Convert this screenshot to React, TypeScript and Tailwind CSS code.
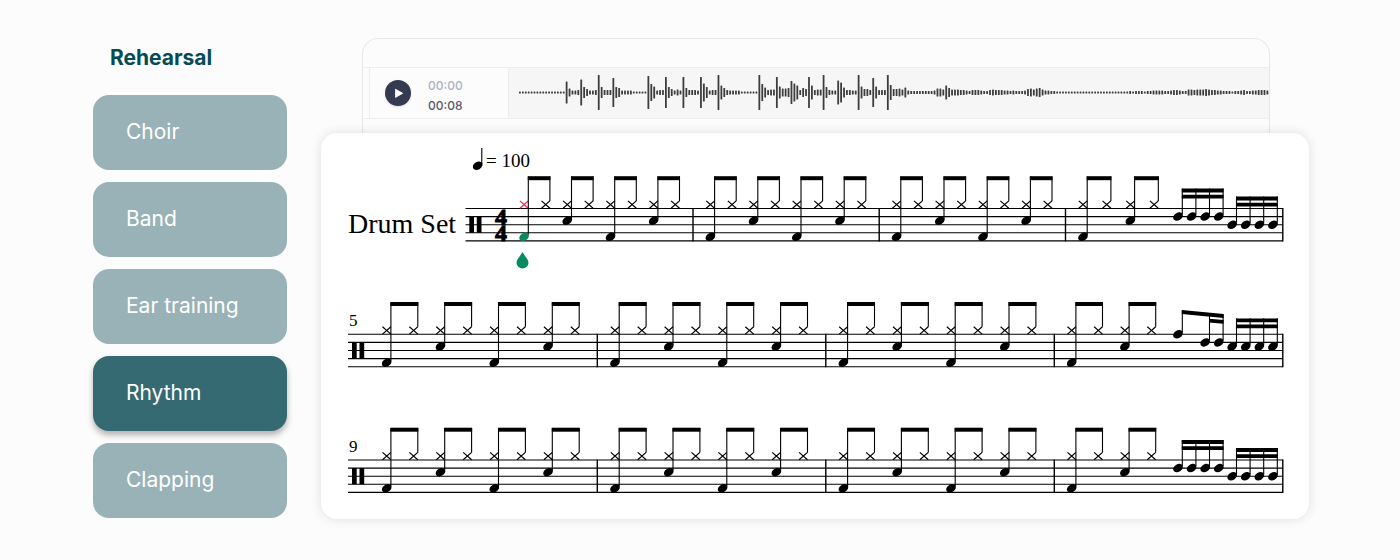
import { clsx } from "clsx";

const categories = ["Choir", "Band", "Ear training", "Rhythm", "Clapping"];

// bar heights of the recording, left to right
const wave = [
  2, 2, 2, 2, 2, 2, 2, 2, 2, 2, 2, 2, 2, 2, 2, 2,
  22, 8, 4, 4, 5, 26, 11, 7, 4, 4, 5, 35, 11, 5, 5, 5, 29, 11, 9, 4, 4, 4, 4, 2, 2, 2, 2, 2,
  33, 17, 12, 4, 5, 5, 31, 11, 7, 4, 6, 4, 31, 9, 5, 5, 5, 4, 31, 18, 11, 4, 5, 5,
  35, 14, 9, 5, 4, 4, 4, 4, 2, 2, 2, 2, 2, 2, 35, 17, 10, 5, 6, 6, 31, 12, 8, 8, 9,
  23, 18, 14, 5, 9, 7, 31, 14, 5, 6, 6, 35, 11, 5, 4, 4, 24, 20, 10, 5, 5, 4, 4,
  35, 12, 7, 7, 5, 29, 12, 5, 5, 5, 35, 15, 7, 7, 8, 6, 10, 4,
  3, 3, 3, 3, 3, 3, 3, 3, 4, 8, 8, 6, 14, 9, 6, 6, 6, 5, 5, 4, 3, 5, 5,
  5, 4, 3, 3, 5, 6, 5, 5, 5, 4, 4, 3, 4, 3, 3, 3, 4, 7, 8, 6, 8, 9, 6, 4, 4, 3, 3,
  2, 2, 2, 2, 2, 2, 2, 2, 2, 2, 2, 2, 2, 2, 2, 2, 2, 2, 2, 2, 2, 2, 2, 2, 2, 3, 2, 3, 3, 3, 2, 3, 3, 4, 4,
  4, 4, 3, 3, 4, 5, 5, 4, 3, 3, 6, 6, 5, 6, 6, 6, 7, 6, 5, 5, 4, 4, 3, 3, 3, 2, 3, 3, 4, 5, 3, 3, 4, 4, 5, 5, 5, 4,
];

const SPACE = 8.1;

function Head({ x, y, color = "black" }: { x: number; y: number; color?: string }) {
  return <ellipse cx={x} cy={y} rx="5.2" ry="3.8" transform={`rotate(-32 ${x} ${y})`} fill={color} />;
}

function Cross({ x, color = "black" }: { x: number; color?: string }) {
  return <path d={`M${x - 4.2} -7.6l8.4 7.4m0 -7.4l-8.4 7.4`} stroke={color} strokeWidth="1.2" fill="none" />;
}

// hi-hat pair with a kick (low) or snare under its first note
function Pair({ x, gap, low, active }: { x: number; gap: number; low: boolean; active?: boolean }) {
  const y = SPACE * (low ? 3.5 : 1.5);
  return (
    <g>
      <Cross x={x} color={active ? "#f0204c" : "black"} />
      <Cross x={x + gap} />
      <path d={`M${x + 4.2} -32V${y - 2}M${x + gap + 4.2} -32V-7.5`} stroke="black" strokeWidth="1.1" />
      <path d={`M${x + 3.7} -30.3h${gap + 1}`} stroke="black" strokeWidth="4" />
      <Head x={x} y={y} color={active ? "#078a60" : "black"} />
    </g>
  );
}

function Measure({ x, gap, pairs = 4, active }: { x: number; gap: number; pairs?: number; active?: boolean }) {
  return (
    <>
      {Array.from({ length: pairs }, (_, i) => (
        <Pair key={i} x={x + i * 2 * gap} gap={gap} low={i % 2 === 0} active={active && i === 0} />
      ))}
    </>
  );
}

function Sixteenths({ x, y, top }: { x: number; y: number; top: number }) {
  const xs = [0, 1, 2, 3].map((i) => x + i * 13.6);
  return (
    <g>
      {xs.map((nx) => (
        <g key={nx}>
          <Head x={nx} y={y} />
          <path d={`M${nx + 4.3} ${top}V${y - 2}`} stroke="black" strokeWidth="1.1" />
        </g>
      ))}
      <path d={`M${x + 3.8} ${top + 2}h41.8m-41.8 6.1h41.8`} stroke="black" strokeWidth="3.8" />
    </g>
  );
}

// eighth note followed by two sixteenths under a falling beam
function Falling({ x }: { x: number }) {
  return (
    <g>
      <Head x={x} y={0} />
      <Head x={x + 27.2} y={SPACE} />
      <Head x={x + 40.8} y={SPACE} />
      <path d={`M${x + 4.3} -24V-2M${x + 31.5} -21V6M${x + 45.1} -20V6`} stroke="black" strokeWidth="1.1" />
      <path d={`M${x + 3.8} -24.3l41.8 4v3.9l-41.8 -4zM${x + 31} -15.6l14.6 1.4v3.7l-14.6 -1.4z`} />
    </g>
  );
}

function Staff({ start, bars, clef }: { start: number; bars: number[]; clef: number }) {
  return (
    <g>
      {[0, 1, 2, 3, 4].map((n) => (
        <path key={n} d={`M${start} ${n * SPACE}H962`} stroke="black" strokeWidth="1.1" />
      ))}
      {bars.map((x) => (
        <path key={x} d={`M${x} -0.5V${SPACE * 4 + 0.5}`} stroke="black" strokeWidth="1.4" />
      ))}
      <path d={`M${clef} ${SPACE}h4.7v16.2h-4.7zm7.5 0h4.7v16.2h-4.7z`} />
    </g>
  );
}

function Score() {
  const rows = [
    { label: "5", y: 201.3 },
    { label: "9", y: 327 },
  ];
  return (
    <svg viewBox="0 0 988 386" className="block w-full font-['Liberation_Serif',serif]" role="img" aria-label="Drum Set score">
      <Head x={156.7} y={32.7} />
      <path d="M160.8 15V31" stroke="black" strokeWidth="1.1" />
      <text x="165" y="34" fontSize="19">= 100</text>
      <text x="27" y="100" fontSize="28">Drum Set</text>

      <g transform="translate(0 75.5)">
        <Staff start={144.5} bars={[372, 558.2, 744.5, 961.8]} clef={148.3} />
        <text fontSize="24" fontWeight="700" stroke="black" strokeWidth="0.9">
          <tspan x="174" y="16.2">4</tspan>
          <tspan x="174" y="32.4">4</tspan>
        </text>
        <Measure x={203.1} gap={21.6} active />
        <Measure x={389.4} gap={21.6} />
        <Measure x={575.6} gap={21.6} />
        <Measure x={762} gap={23.7} pairs={2} />
        <Sixteenths x={857} y={SPACE} top={-20} />
        <Sixteenths x={911.2} y={SPACE * 2} top={-12} />
        <path d="M201.5 43.5c-2 4-6 7.2-6 10.8a6 5.6 0 0 0 12 0c0-3.6-4-6.8-6-10.8z" fill="#078a60" />
      </g>

      {rows.map((row, i) => (
        <g key={row.label} transform={`translate(0 ${row.y})`}>
          <text x="28" y="-8" fontSize="17">{row.label}</text>
          <Staff start={27} bars={[276.3, 504.8, 733.3, 961.8]} clef={31} />
          <Measure x={65.7} gap={26.9} />
          <Measure x={294} gap={26.9} />
          <Measure x={522.4} gap={26.9} />
          <Measure x={750.7} gap={26.6} pairs={2} />
          {i === 0 ? <Falling x={857} /> : <Sixteenths x={857} y={SPACE} top={-20} />}
          <Sixteenths x={911.2} y={SPACE * (i === 0 ? 1.5 : 2)} top={i === 0 ? -16 : -12} />
        </g>
      ))}
    </svg>
  );
}

function Player() {
  return (
    <div className="mr-[39px] ml-[41px] h-[95px] overflow-hidden rounded-t-2xl border border-b-0 border-[#e8e8e8] pt-7">
      <div className="flex h-[52px] border-y border-[#eeeeee]">
        <div className="ml-1.5 flex w-[140px] shrink-0 items-center gap-[17px] border-x border-[#eeeeee] bg-[#fcfcfc] pl-[15px]">
          <button type="button" aria-label="Play" className="flex size-[26px] items-center justify-center rounded-full bg-[#343a50] shadow-sm">
            <svg viewBox="0 0 26 26" className="size-full" fill="white">
              <path d="M10.5 9.2v8.2l7.2-4.1z" stroke="white" strokeWidth="0.8" strokeLinejoin="round" />
            </svg>
          </button>
          <div className="pt-[5px] text-xs leading-5 font-medium">
            <p className="text-[#abb2c2]">00:00</p>
            <p className="text-[#55586a]">00:08</p>
          </div>
        </div>
        <div className="min-w-0 flex-1 overflow-hidden bg-[#f6f6f6]">
          <svg viewBox="0 0 761 50" className="block h-[50px] w-full" preserveAspectRatio="xMinYMid slice">
            {wave.map((h, i) => (
              <rect key={i} x={10 + i * 2.92} y={24.5 - h / 2} width="1.8" height={h} rx="0.5" fill="#3d3d3d" />
            ))}
          </svg>
        </div>
      </div>
    </div>
  );
}

export default function App() {
  return (
    <div className="flex min-h-screen items-start gap-[34px] bg-[#fcfcfc] pt-[38px] pr-[91px] pl-[93px] font-['Inter',sans-serif]">
      <nav className="w-[194px] shrink-0" aria-labelledby="nav-title">
        <h2 id="nav-title" className="mb-[17px] pl-[17px] text-[21px] leading-10 font-bold text-[#044b54]">Rehearsal</h2>
        <ul className="flex flex-col gap-3">
          {categories.map((name) => (
            <li key={name}>
              <button
                type="button"
                aria-pressed={name === "Rhythm"}
                className={clsx(
                  "block h-[75px] w-full rounded-2xl pb-0.5 pl-[33px] text-left text-[21px] text-white",
                  name === "Rhythm" ? "bg-[#366a73] shadow-[0_4px_6px_rgba(0,0,0,0.3)]" : "bg-[#99b2b7]",
                )}
              >
                {name}
              </button>
            </li>
          ))}
        </ul>
      </nav>

      <main className="min-w-0 flex-1">
        <Player />
        <div className="relative rounded-2xl bg-white shadow-[0_0_12px_rgba(0,0,0,0.12)]">
          <Score />
        </div>
      </main>
    </div>
  );
}
